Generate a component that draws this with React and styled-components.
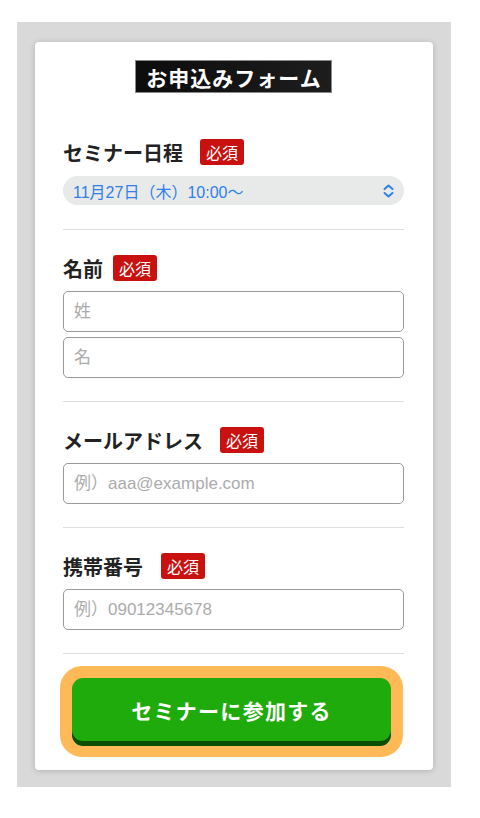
import React from 'react';
import styled, { createGlobalStyle } from 'styled-components';

const GlobalStyle = createGlobalStyle`
	body {
		margin: 0;
		background: #ffffff;
		font-family: "Noto Sans CJK JP", "Noto Sans", sans-serif;
	}
	* {
		box-sizing: border-box;
	}
`;

const fields = [
	{ label: 'メールアドレス', gap: 17, placeholder: '例）aaa@example.com' },
	{ label: '携帯番号', gap: 18, placeholder: '例）09012345678' },
];

export default function App() {
	return (
		<>
			<GlobalStyle />
			<Frame>
				<Card>
					<TitleRow>
						<Title>お申込みフォーム</Title>
					</TitleRow>

					<Section $bottom={24}>
						<LabelRow $gap={17}>
							<Label>セミナー日程</Label>
							<Badge>必須</Badge>
						</LabelRow>
						<Select>
							<span>11月27日（木）10:00～</span>
							<svg width="11" height="14" viewBox="0 0 11 14" fill="none">
								<path
									d="M1.5 5 L5.5 1.5 L9.5 5 M1.5 9 L5.5 12.5 L9.5 9"
									stroke="#2f7fe8"
									strokeWidth="2"
									strokeLinecap="round"
									strokeLinejoin="round"
								/>
							</svg>
						</Select>
					</Section>

					<Section>
						<LabelRow $gap={10}>
							<Label>名前</Label>
							<Badge>必須</Badge>
						</LabelRow>
						<Input type="text" placeholder="姓" />
						<Input type="text" placeholder="名" $stacked />
					</Section>

					{fields.map((field) => (
						<Section key={field.label}>
							<LabelRow $gap={field.gap}>
								<Label>{field.label}</Label>
								<Badge>必須</Badge>
							</LabelRow>
							<Input type="text" placeholder={field.placeholder} />
						</Section>
					))}

					<ButtonRing>
						<SubmitButton type="button">セミナーに参加する</SubmitButton>
					</ButtonRing>
				</Card>
			</Frame>
		</>
	);
}

const Frame = styled.div`
	width: 434px;
	margin: 22px 0 0 17px;
	padding: 20px 18px 17px;
	background: #d9d9d9;
`;

const Card = styled.div`
	background: #ffffff;
	border-radius: 4px;
	box-shadow: 0 1px 6px rgba(0, 0, 0, 0.18);
	padding: 18px 29px 13px 28px;
`;

const TitleRow = styled.div`
	display: flex;
	justify-content: center;
	margin-bottom: 21px;
`;

const Title = styled.h1`
	margin: 0;
	height: 33px;
	padding: 0 9px 0 10px;
	display: flex;
	align-items: center;
	background: linear-gradient(90deg, #0c0c0c, #1d1d1d);
	border: 1px solid #8a8a8a;
	color: #ffffff;
	font-size: 21px;
	font-weight: 700;
	letter-spacing: 1px;
`;

const Section = styled.div`
	padding: 25px 0 ${(p) => p.$bottom || 23}px;
	border-bottom: 1px solid #dedede;
`;

const LabelRow = styled.div`
	display: flex;
	align-items: center;
	gap: ${(p) => p.$gap}px;
	height: 26px;
	margin-bottom: 10px;
`;

const Label = styled.span`
	font-size: 20px;
	font-weight: 700;
	color: #222222;
`;

const Badge = styled.span`
	display: inline-flex;
	align-items: center;
	justify-content: center;
	width: 44px;
	height: 26px;
	border-radius: 3px;
	background: #c9110f;
	color: #ffffff;
	font-size: 16px;
	font-weight: 400;
`;

const Select = styled.div`
	display: flex;
	align-items: center;
	justify-content: space-between;
	height: 29px;
	margin-top: 11px;
	padding: 0 10px;
	border-radius: 15px;
	background: #e8e9e9;
	color: #2f7fe8;
	font-family: "Liberation Sans", "Noto Sans CJK JP", sans-serif;
	font-size: 16px;
`;

const Input = styled.input`
	display: block;
	width: 100%;
	height: 41px;
	margin-top: ${(p) => (p.$stacked ? 5 : 0)}px;
	padding: 0 10px;
	border: 1px solid #9a9a9a;
	border-radius: 5px;
	background: #ffffff;
	font-family: "Liberation Sans", "Noto Sans CJK JP", sans-serif;
	font-size: 17px;
	color: #222222;
	&::placeholder {
		color: #ababab;
	}
`;

const ButtonRing = styled.div`
	width: 343px;
	margin: 12px 0 0 -3px;
	padding: 12px 12px 16px;
	border-radius: 22px;
	background: #ffb957;
`;

const SubmitButton = styled.button`
	display: block;
	width: 100%;
	height: 63px;
	border: none;
	border-radius: 11px;
	background: #1fab0b;
	box-shadow: 0 5px 0 #0b4f07;
	color: #ffffff;
	font-family: "Noto Sans CJK JP", "Noto Sans", sans-serif;
	font-size: 21px;
	font-weight: 700;
	letter-spacing: 1.3px;
	cursor: pointer;
`;
